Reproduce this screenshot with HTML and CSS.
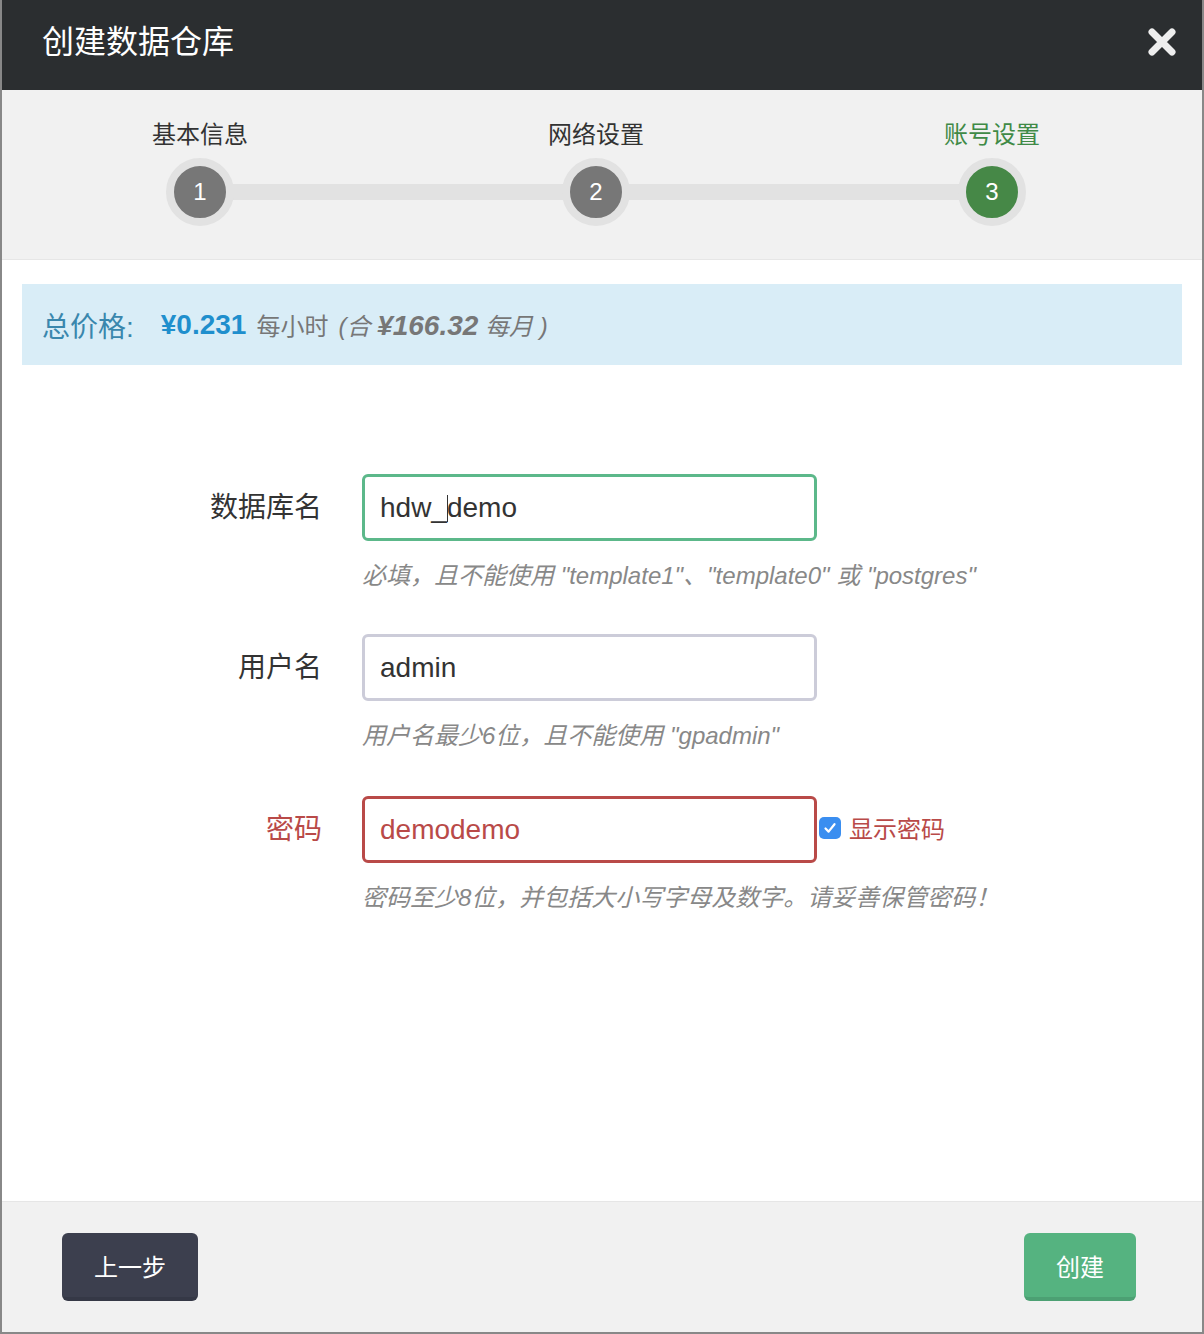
FILE: index.html
```html
<!DOCTYPE html>
<html lang="zh-CN">
<head>
<meta charset="utf-8">
<title>创建数据仓库</title>
<link rel="stylesheet" href="styles.css">
</head>
<body>
<div class="modal">
  <header class="modal-header">
    <h1 class="title">创建数据仓库</h1>
    <button class="close" type="button" aria-label="关闭">
      <svg width="28" height="28" viewBox="0 0 28 28"><path d="M4 4 L24 24 M24 4 L4 24" stroke="#eeeeee" stroke-width="7" stroke-linecap="round"/></svg>
    </button>
  </header>

  <div class="steps">
    <div class="track"></div>
    <div class="step">
      <div class="step-label">基本信息</div>
      <div class="step-dot">1</div>
    </div>
    <div class="step">
      <div class="step-label">网络设置</div>
      <div class="step-dot">2</div>
    </div>
    <div class="step active">
      <div class="step-label">账号设置</div>
      <div class="step-dot">3</div>
    </div>
  </div>

  <main class="modal-body">
    <div class="price">
      <span class="price-label">总价格:</span>
      <span class="price-amount">¥0.231</span>
      <span class="price-unit">每小时</span>
      <span class="price-month">(合 <b>¥166.32</b> 每月 )</span>
    </div>

    <form class="form">
      <div class="row">
        <label class="label">数据库名</label>
        <div class="field">
          <div class="control">
            <div class="input ok">hdw_<span class="caret"></span>demo</div>
          </div>
          <p class="help">必填，且不能使用 "template1"、"template0" 或 "postgres"</p>
        </div>
      </div>
      <div class="row">
        <label class="label">用户名</label>
        <div class="field">
          <div class="control">
            <div class="input">admin</div>
          </div>
          <p class="help">用户名最少6位，且不能使用 "gpadmin"</p>
        </div>
      </div>
      <div class="row row-error">
        <label class="label">密码</label>
        <div class="field">
          <div class="control">
            <div class="input error">demodemo</div>
            <span class="show-pass">
              <span class="checkbox"><svg width="16" height="16" viewBox="0 0 16 16"><path d="M3.5 8.5 L6.6 11.6 L12.5 4.2" fill="none" stroke="#fff" stroke-width="2.2" stroke-linecap="round" stroke-linejoin="round"/></svg></span>
              <span class="show-text">显示密码</span>
            </span>
          </div>
          <p class="help">密码至少8位，并包括大小写字母及数字。请妥善保管密码！</p>
        </div>
      </div>
    </form>
  </main>

  <footer class="modal-footer">
    <button class="btn btn-prev" type="button">上一步</button>
    <button class="btn btn-create" type="button">创建</button>
  </footer>
</div>
</body>
</html>
```

FILE: styles.css
```css
* { box-sizing: border-box; }

html, body {
  margin: 0;
  padding: 0;
  background: #ffffff;
}

body {
  font-family: "Liberation Sans", "Noto Sans CJK SC", sans-serif;
  color: #333333;
}

.modal {
  width: 1204px;
  height: 1334px;
  display: flex;
  flex-direction: column;
  border-left: 2px solid #888888;
  border-right: 2px solid #888888;
  border-bottom: 2px solid #888888;
  background: #ffffff;
}

/* Header */
.modal-header {
  height: 90px;
  flex: none;
  background: #2b2e30;
  display: flex;
  align-items: center;
  justify-content: space-between;
  padding: 0 26px 6px 40px;
}

.title {
  margin: 0;
  font-size: 32px;
  font-weight: normal;
  color: #ffffff;
  line-height: 40px;
}

.close {
  background: none;
  border: 0;
  padding: 0;
  width: 28px;
  height: 28px;
  display: flex;
}

/* Steps */
.steps {
  flex: none;
  position: relative;
  height: 170px;
  background: #f1f1f1;
  border-bottom: 1px solid #e6e6e6;
  display: grid;
  grid-template-columns: repeat(3, 396px);
  padding-top: 28px;
}

.track {
  position: absolute;
  left: 198px;
  top: 94px;
  width: 792px;
  height: 16px;
  background: #e2e2e2;
}

.step {
  display: flex;
  flex-direction: column;
  align-items: center;
}

.step-label {
  font-size: 24px;
  line-height: 34px;
  color: #333333;
}

.step-dot {
  position: relative;
  margin-top: 6px;
  width: 68px;
  height: 68px;
  border: 8px solid #e2e2e2;
  border-radius: 50%;
  background: #777777;
  color: #ffffff;
  font-size: 24px;
  line-height: 52px;
  text-align: center;
}

.step.active .step-label { color: #3f8a46; }
.step.active .step-dot { background: #468847; }

/* Body */
.modal-body {
  flex: 1;
  padding: 24px 20px 0;
}

.price {
  height: 81px;
  background: #d9edf7;
  display: flex;
  align-items: center;
  padding: 0 20px;
  white-space: pre;
}

.price-label {
  font-size: 28px;
  color: #3a87ad;
  margin-right: 27px;
}

.price-amount {
  font-size: 28px;
  font-weight: bold;
  color: #1f8fcd;
  margin-right: 10px;
}

.price-unit {
  font-size: 24px;
  color: #777777;
  margin-right: 10px;
}

.price-month {
  font-size: 24px;
  font-style: italic;
  color: #777777;
}

.price-month b {
  font-size: 28px;
}

/* Form */
.form {
  margin-top: 109px;
}

.row {
  display: grid;
  grid-template-columns: 300px 1fr;
  column-gap: 40px;
  margin-bottom: 41px;
}

.row-error {
  padding-top: 2px;
}

.label {
  font-size: 28px;
  line-height: 67px;
  text-align: right;
  color: #333333;
}

.row-error .label { color: #b94a48; }

.control {
  display: flex;
  align-items: center;
}

.input {
  width: 455px;
  height: 67px;
  border: 3px solid #ccccd9;
  border-radius: 6px;
  padding: 0 15px;
  font-size: 28px;
  line-height: 61px;
  color: #333333;
  background: #ffffff;
}

.input.ok { border-color: #5cb88a; }

.input.error {
  border-color: #b94a48;
  color: #b94a48;
}

.caret {
  display: inline-block;
  width: 1px;
  height: 27px;
  background: #333333;
  vertical-align: -5px;
  margin-right: -1px;
}

.show-pass {
  display: flex;
  align-items: center;
  margin-left: 2px;
  margin-top: -4px;
}

.checkbox {
  width: 22px;
  height: 22px;
  border-radius: 5px;
  background: #3a8ef0;
  display: flex;
  align-items: center;
  justify-content: center;
}

.show-text {
  margin-left: 8px;
  font-size: 24px;
  color: #b94a48;
}

.help {
  margin: 18px 0 0;
  font-size: 24px;
  line-height: 34px;
  font-style: italic;
  color: #888888;
}

/* Footer */
.modal-footer {
  flex: none;
  height: 131px;
  background: #f1f1f1;
  border-top: 1px solid #e6e6e6;
  display: flex;
  align-items: flex-start;
  justify-content: space-between;
  padding: 31px 66px 0 60px;
}

.btn {
  height: 68px;
  border: 0;
  border-bottom: 4px solid rgba(0, 0, 0, 0.1);
  border-radius: 6px;
  color: #ffffff;
  font-family: "Liberation Sans", "Noto Sans CJK SC", sans-serif;
  font-size: 24px;
  padding: 0;
}

.btn-prev {
  width: 136px;
  background: #3c3f4e;
}

.btn-create {
  width: 112px;
  background: #55b380;
}
```
